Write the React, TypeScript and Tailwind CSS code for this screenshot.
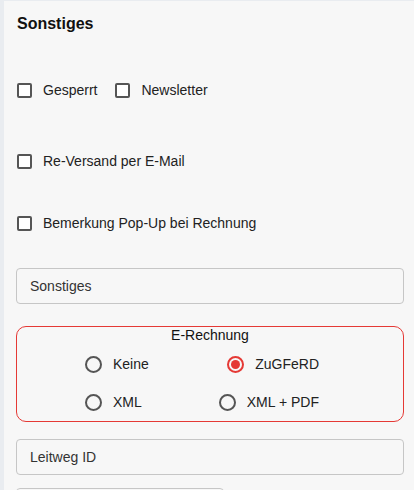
import React from "react";

const font = { fontFamily: '"Liberation Sans", Arial, sans-serif' };

function Check({ label }: { label: string }) {
  return (
    <label className="flex items-center h-5">
      <span className="ml-px w-[15px] h-[15px] border-2 border-[#555] rounded-[2px] bg-white" />
      <span className="ml-[11px] text-[14px] text-[#222]">{label}</span>
    </label>
  );
}

function Radio({ label, checked }: { label: string; checked?: boolean }) {
  return (
    <label className="flex items-center h-6">
      {checked ? (
        <span className="w-[17px] h-[17px] rounded-full border-2 border-[#e53935] flex items-center justify-center">
          <span className="w-[9px] h-[9px] rounded-full bg-[#e53935]" />
        </span>
      ) : (
        <span className="w-[17px] h-[17px] rounded-full border-2 border-[#555]" />
      )}
      <span className="ml-[11px] text-[14px] text-[#222]">{label}</span>
    </label>
  );
}

function Field({ placeholder }: { placeholder: string }) {
  return (
    <div className="h-[36px] border border-[#c6c6c6] rounded-[4px] flex items-center pl-[13px] text-[14px] text-[#333]">
      {placeholder}
    </div>
  );
}

export default function App() {
  return (
    <div
      style={font}
      className="w-[414px] h-[490px] overflow-hidden bg-[#f7f7f7] border-l-4 border-t border-[#e9ecf0] pl-3 pr-[10px]"
    >
      <h2 className="pt-[13px] ml-px leading-5 text-[16px] font-bold text-[#111]">Sonstiges</h2>

      <div className="mt-[46px] flex items-center">
        <Check label="Gesperrt" />
        <div className="ml-[17px]">
          <Check label="Newsletter" />
        </div>
      </div>

      <div className="mt-[51px]">
        <Check label="Re-Versand per E-Mail" />
      </div>

      <div className="mt-[42px]">
        <Check label="Bemerkung Pop-Up bei Rechnung" />
      </div>

      <div className="mt-[35px]">
        <Field placeholder="Sonstiges" />
      </div>

      <fieldset className="mt-[22px] h-[96px] border border-[#e53935] rounded-[10px]">
        <div className="text-center leading-4 text-[14px] text-[#111]">E-Rechnung</div>
        <div className="mt-[9px] flex justify-between pl-[68px] pr-[84px]">
          <Radio label="Keine" />
          <Radio label="ZuGFeRD" checked />
        </div>
        <div className="mt-[14px] flex justify-between pl-[68px] pr-[84px]">
          <Radio label="XML" />
          <Radio label="XML + PDF" />
        </div>
      </fieldset>

      <div className="mt-[17px]">
        <Field placeholder="Leitweg ID" />
      </div>

      <div className="mt-[13px] w-[208px] h-[36px] border border-[#c6c6c6] rounded-[4px]" />
    </div>
  );
}
